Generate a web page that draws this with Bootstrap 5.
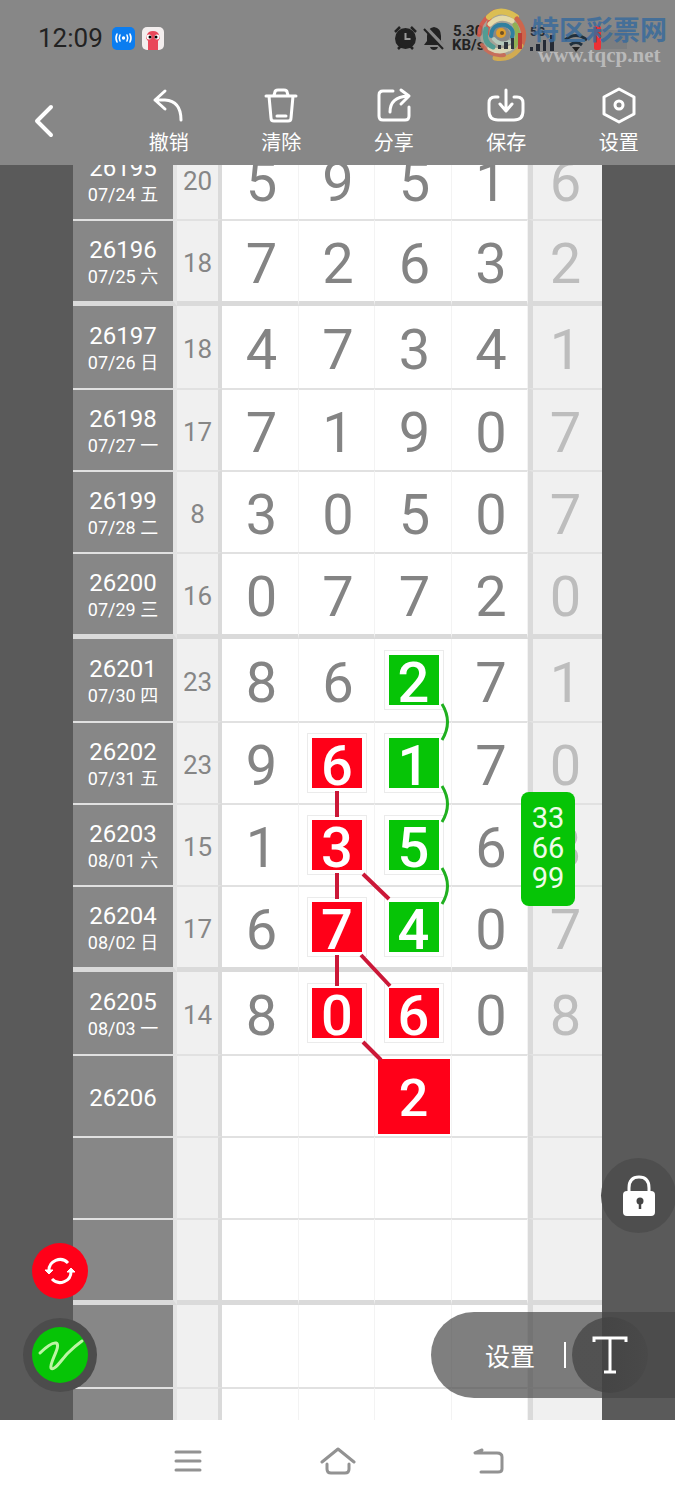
<!DOCTYPE html>
<html lang="zh-CN">
<head>
<meta charset="utf-8">
<meta name="viewport" content="width=device-width, initial-scale=1">
<title>走势图</title>
<link href="https://cdn.jsdelivr.net/npm/bootstrap@5.3.0/dist/css/bootstrap.min.css" rel="stylesheet">
<style>
body{font-family:Roboto,"Noto Sans CJK SC",sans-serif;background:#fff;color:#fff}
.topbar{background:#878787;position:relative;z-index:2}
.statusbar{height:76px;padding-left:38px;color:#222}
.clock{font-size:26px;line-height:32px}
.speed{font-size:15px;line-height:14px;font-weight:700}
.right-status{left:392px;top:0;height:76px;color:#222}
.brand-mark{left:476px;top:8px;opacity:.88}
.brand-text{left:532px;top:14px;line-height:24px}
.brand-name{font-size:27px;line-height:34px;font-weight:700;color:#3a6b9c;opacity:.85}
.brand-url{font-family:"Liberation Serif",serif;font-size:21px;line-height:14px;font-weight:700;color:#b9b9b9;margin-left:6px}
.tool{background:none;border:0;color:#fff;height:89px;padding:2px 0 0;font-size:20px;line-height:30px}
.tool svg{display:block;margin:0 auto 2px}
.ico{fill:none;stroke:#fff;stroke-width:3;stroke-linecap:round;stroke-linejoin:round}
.board{background:#5a5a5a;padding:0 73px}
.sheet{margin-top:-28px}
.grid-tbl{table-layout:fixed;width:100%;border-collapse:separate;border-spacing:0}
.grid-tbl th,.grid-tbl td{height:82px;padding:6px 0 0;text-align:center;vertical-align:middle;border:0 solid #e1e1e1;border-top-width:2px;background:#fff;font-weight:400}
.grid-tbl tr.first>*{border-top-width:0}
.grid-tbl tr.last>*{height:87px;border-bottom:5px solid #dadada}
.grid-tbl tr.cut>*{height:33px}
.grid-tbl th.issue{background:#878787;border-right:4px solid #e4e4e4;color:#fff;padding-top:4px}
.grid-tbl td.total{background:#f0f0f0;border-right:4px solid #dadada;color:#868686;font-size:26px;line-height:32px;padding-top:3px}
.grid-tbl td.extra{background:#f0f0f0;border-left:5px solid #dadada;color:#bdbdbd;padding-right:4px}
.grid-tbl td.num{border-right:1px solid #f3f3f3;padding-left:3px}
.num,.extra{color:#848484;font-size:56px;line-height:56px}
.grid-tbl td.hit{padding:0 0 0 1px}
.issue-no{font-size:24px;line-height:28px}
.issue-day{font-size:18px;line-height:26px}
.tile{width:50px;height:50px;line-height:56px;font-weight:500;color:#fff;box-shadow:0 0 0 4px #fff,0 0 0 5px #ebebeb}
.tile-red{background:#ff0018}
.tile-green{background:#06c406}
.tile-big{width:72px;height:75px;font-size:52px;line-height:80px;box-shadow:none}
.links{left:0;top:0;width:100%;height:100%;pointer-events:none}
.pick{left:448px;top:655px;width:54px;height:114px;padding:11px 0;border-radius:8px;background:#06c406;color:#effbe8;font-size:29px;line-height:30px;text-align:center}
.fab{border:0;padding:0;border-radius:50%;display:flex;align-items:center;justify-content:center}
.fab-lock{right:-1px;bottom:187px;width:75px;height:75px;background:#4e4e4e}
.fab-swap{left:32px;bottom:121px;width:56px;height:56px;background:#ff0018}
.fab-pen{left:23px;bottom:28px;width:74px;height:74px;background:#4c4c4c}
.fab-pen span{width:56px;height:56px;border-radius:50%;background:#06c406}
.textbar{right:0;bottom:22px;width:244px;height:86px;border-radius:43px 0 0 43px;background:rgba(70,70,70,.69)}
.textbar .setting{background:none;border:0;color:#fff;font-size:25px;line-height:32px;padding:6px 0 0;margin-left:54px}
.textbar .bar-sep{width:2px;height:26px;background:#fff;margin-left:29px}
.textbar .letter{border:0;width:76px;height:76px;border-radius:50%;background:linear-gradient(90deg,rgba(66,66,66,.72) 40%,rgba(66,66,66,.3));margin-left:6px;padding:0}
.sysnav{height:80px;background:#fff}
.sysnav button{border:0;background:none;padding:2px 0 0;width:150px}
.sysnav svg{fill:none;stroke:#929292;stroke-width:3;stroke-linecap:round;stroke-linejoin:round}
</style>
</head>
<body>
<div class="d-flex flex-column min-vh-100">
<header class="topbar">
  <div class="statusbar d-flex align-items-center gap-2">
    <span class="clock">12:09</span>
    <svg width="54" height="24" viewBox="0 0 54 24" aria-hidden="true">
      <rect x="1" y="1" width="23" height="23" rx="5" fill="#0b7df0"/>
      <g fill="none" stroke="#fff" stroke-width="1.6" stroke-linecap="round"><path d="M6 8q-2 4 0 8M9 9q-1.500 3 0 6M19 8q2 4 0 8M16 9q1.500 3 0 6"/></g><circle cx="12.500" cy="12" r="1.700" fill="#fff"/>
      <rect x="31" y="1" width="22" height="23" rx="5" fill="#f3eeee"/>
      <path d="M36 9q1-4 6-4t6 4l1 3q-1 2-2 3v9H37v-9q-1-1-2-3z" fill="#e9485a"/>
      <circle cx="38" cy="11" r="2.500" fill="#fff"/><circle cx="46" cy="11" r="2.500" fill="#fff"/><circle cx="39" cy="11" r="1.500"/><circle cx="45" cy="11" r="1.500"/>
    </svg>
  </div>
  <div class="right-status position-absolute d-flex align-items-center">
    <svg width="56" height="26" viewBox="0 0 56 26" aria-hidden="true">
      <circle cx="13.500" cy="13.500" r="8.500" fill="none" stroke="#222" stroke-width="4"/><circle cx="13.500" cy="13.500" r="8" fill="#222"/><path d="M3 7l5-5M24 7l-5-5M6 24l3-3M21 24l-3-3" stroke="#222" stroke-width="2.500"/><path d="M13.500 8v6h5" fill="none" stroke="#999" stroke-width="2"/>
      <path d="M42 2q7 1 7 9v5l3 4H32l3-4v-5q0-8 7-9zM38 22h8q-1 3-4 3t-4-3z" fill="#222"/><path d="M33 2l20 21" stroke="#878787" stroke-width="4"/><path d="M32 4l19 20" stroke="#222" stroke-width="2"/>
    </svg>
    <span class="speed ms-1 text-center">5.30<br>KB/s</span>
    <svg class="ms-2" width="170" height="32" viewBox="0 0 170 32" aria-hidden="true">
      <g fill="#252b35"><path d="M38 25h3v4h-3zM44 22h4v7h-4zM51 18h3v11h-3zM58 13h4v16h-4z"/><text x="38" y="14" font-size="12" font-weight="700">5G</text></g>
      <path d="M73 18q11-9 22 0M78 23q6-5 12 0" fill="none" stroke="#20303d" stroke-width="3"/><path d="M80 25h8l-4 5z" fill="#222"/>
      <rect x="102" y="4" width="7" height="24" rx="2" fill="#ed3035"/><rect x="109" y="8" width="26" height="19" fill="#7c7e80"/>
    </svg>
  </div>
  <svg class="brand-mark position-absolute" width="52" height="54" viewBox="0 0 52 54" aria-hidden="true">
    <g fill="none" stroke-linecap="round">
      <circle cx="25" cy="27" r="15" stroke="#b9b3a1" stroke-width="12" opacity=".7"/>
      <path d="M3 27Q3 15 15 6q-3 10-4 20" stroke="#d9594a" stroke-width="4"/><path d="M13 9Q24-2 40 9" stroke="#e7c64c" stroke-width="6"/><path d="M14 16q10-10 22-3" stroke="#f1e6ad" stroke-width="5"/>
      <path d="M41 11q10 12 5 25" stroke="#d76245" stroke-width="5"/><path d="M39 17q6 12-1 21" stroke="#93b74b" stroke-width="5"/><path d="M45 38Q36 53 19 50" stroke="#ddb04a" stroke-width="5"/><path d="M6 37q8 12 22 10" stroke="#cf6b55" stroke-width="4"/><path d="M14 40q10 6 20 0" stroke="#e6e3bd" stroke-width="5"/>
      <path d="M10 21q-3 14 7 18" stroke="#4ba095" stroke-width="5"/><path d="M15 28q1-13 14-11 10 3 7 12" stroke="#2380a4" stroke-width="4"/><path d="M18 31q6 7 15 3" stroke="#bcd3c4" stroke-width="4"/>
    </g><circle cx="25" cy="25" r="5" fill="#eea420"/><circle cx="26" cy="25" r="2" fill="#6d4a16"/>
    <path d="M22 37h3v4h-3zM28 34h4v7h-4zM35 30h3v11h-3z" fill="#252b35"/><path d="M42 25h4v16h-4z" fill="#c3352c"/>
  </svg>
  <div class="brand-text position-absolute"><div class="brand-name">特区彩票网</div><div class="brand-url">www.tqcp.net</div></div>
  <nav class="row row-cols-6 g-0" aria-label="工具栏">
    <button class="tool col" aria-label="返回"><svg class="ico ms-4" width="40" height="60" viewBox="0 0 40 60"><path d="M27 16L13 30l14 14" stroke-width="4"/></svg></button>
    <button class="tool col"><svg class="ico" width="36" height="40" viewBox="0 0 36 40"><path d="M14 5L4 14l10 9M4 14h10q16 1 16 20"/></svg>撤销</button>
    <button class="tool col"><svg class="ico" width="36" height="40" viewBox="0 0 36 40"><path d="M3 10h30M6 10l2 22q0 3 3 3h14q3 0 3-3l2-22M11 9l1-3q0-2 3-2h6q3 0 3 2l1 3M14 30h9"/></svg>清除</button>
    <button class="tool col"><svg class="ico" width="36" height="40" viewBox="0 0 36 40"><path d="M17 5H7q-4 0-4 4v21q0 4 4 4h22q4 0 4-4v-9M14 26q0-15 18-16M25 4l8 6-8 8"/></svg>分享</button>
    <button class="tool col"><svg class="ico" width="38" height="40" viewBox="0 0 38 40"><path d="M11 11H8q-6 0-6 6v8q0 9 9 9h16q9 0 9-9v-8q0-6-6-6h-3M19 4v20M13 18l6 7 6-7"/></svg>保存</button>
    <button class="tool col"><svg class="ico" width="36" height="40" viewBox="0 0 36 40"><path d="M18 3l15 8v17l-15 8-15-8V11z"/><circle cx="18" cy="19" r="4"/></svg>设置</button>
  </nav>
</header>

<main class="board position-relative flex-grow-1">
  <div class="sheet position-relative">
    <table class="grid-tbl">
      <colgroup><col style="width:104px"><col style="width:45px"><col style="width:77px"><col style="width:76px"><col style="width:77px"><col style="width:76px"><col style="width:74px"></colgroup>
      <tbody id="rows"></tbody>
    </table>
    <svg class="links position-absolute" aria-hidden="true">
      <g stroke="#cb1838" stroke-width="4">
        <path d="M264 654v26M264 736v26M264 818v31"/>
        <path d="M290 737l26 25M288 818l29 31M290 905l18 18"/>
      </g>
      <path d="M369 567q11 18 0 36M369 649q11 18 0 36M369 731q11 18 0 36" fill="none" stroke="#20b020" stroke-width="3"/>
    </svg>
    <div class="pick position-absolute">33<br>66<br>99</div>
  </div>
  <button class="fab fab-lock position-absolute" aria-label="锁定"><svg width="36" height="42" viewBox="0 0 36 42"><path d="M8 18v-5q0-11 10-11t10 11v5" fill="none" stroke="#fff" stroke-width="3"/><rect x="2" y="16" width="32" height="25" rx="4" fill="#fff"/><circle cx="19" cy="26" r="3.500" fill="#444"/><path d="M19 26v8" stroke="#444" stroke-width="2.500"/></svg></button>
  <button class="fab fab-swap position-absolute" aria-label="切换"><svg width="32" height="28" viewBox="0 0 32 28" fill="none" stroke="#fff" stroke-width="3"><path d="M5 14A11 11 0 0 1 24 6M27 14A11 11 0 0 1 8 22"/><path d="M1 13h8l-4 4zM23 15h8l-4-4z" fill="#fff" stroke-width="1"/></svg></button>
  <button class="fab fab-pen position-absolute" aria-label="画笔"><span><svg width="56" height="56" viewBox="0 0 56 56" fill="none" stroke="#bcf5a4" stroke-width="3" stroke-linecap="round"><path d="M8 26Q19 15 24 16c6 2-7 20-5 25 3 4 11-9 17-15q7-7 14-12"/></svg></span></button>
  <div class="textbar position-absolute d-flex align-items-center">
    <button class="setting">设置</button><span class="bar-sep"></span>
    <button class="letter" aria-label="文字"><svg width="38" height="40" viewBox="0 0 38 40" fill="none" stroke="#fff" stroke-width="3"><path d="M3 7V3h32v4M19 3v34M13 37h12"/></svg></button>
  </div>
</main>

<nav class="sysnav d-flex justify-content-center align-items-center" aria-label="系统导航">
  <button aria-label="菜单"><svg width="30" height="26" viewBox="0 0 30 26"><path d="M3 4h24M3 13h24M3 22h24"/></svg></button>
  <button aria-label="主页"><svg width="36" height="30" viewBox="0 0 36 30"><path d="M2 16L18 3l16 13M7 18v5q0 4 4 4h14q4 0 4-4v-5"/></svg></button>
  <button aria-label="返回上一页"><svg width="34" height="30" viewBox="0 0 34 30"><path d="M11 4L4 7h22q5 0 5 4v12q0 3-4 3H10"/></svg></button>
</nav>
</div>

<script>
// 期号, 日期, 和值, 四位开奖号（r 红 / g 绿 / B 大红块）, 末位
const draws = [
  ["26195","07/24 五","20","5 9 5 1","6"],
  ["26196","07/25 六","18","7 2 6 3","2"],
  ["26197","07/26 日","18","4 7 3 4","1"],
  ["26198","07/27 一","17","7 1 9 0","7"],
  ["26199","07/28 二","8","3 0 5 0","7"],
  ["26200","07/29 三","16","0 7 7 2","0"],
  ["26201","07/30 四","23","8 6 2g 7","1"],
  ["26202","07/31 五","23","9 6r 1g 7","0"],
  ["26203","08/01 六","15","1 3r 5g 6","8"],
  ["26204","08/02 日","17","6 7r 4g 0","7"],
  ["26205","08/03 一","14","8 0r 6r 0","8"],
  ["26206","","","- - 2B -",""],
  ["","","","- - - -",""],
  ["","","","- - - -",""],
  ["","","","- - - -",""],
  ["","","","- - - -",""]
];
const tiles = {r:"tile-red", g:"tile-green", B:"tile-red tile-big"};
function cell(v){
  if (v === "-") return '<td class="num"></td>';
  return v[1] ? `<td class="num hit"><div class="tile ${tiles[v[1]]} mx-auto">${v[0]}</div></td>` : `<td class="num">${v}</td>`;
}
document.getElementById("rows").innerHTML = draws.map((d, i) => {
  const kind = i === draws.length - 1 ? "cut" : i % 4 === 1 ? "last" : i % 4 === 2 ? "first" : "";
  return `<tr class="${kind}"><th scope="row" class="issue"><div class="issue-no">${d[0]}</div>${d[1] ? `<div class="issue-day">${d[1]}</div>` : ""}</th>` +
    `<td class="total">${d[2]}</td>${d[3].split(" ").map(cell).join("")}<td class="extra">${d[4]}</td></tr>`;
}).join("");
</script>
<script src="https://cdn.jsdelivr.net/npm/bootstrap@5.3.0/dist/js/bootstrap.bundle.min.js"></script>
</body>
</html>
